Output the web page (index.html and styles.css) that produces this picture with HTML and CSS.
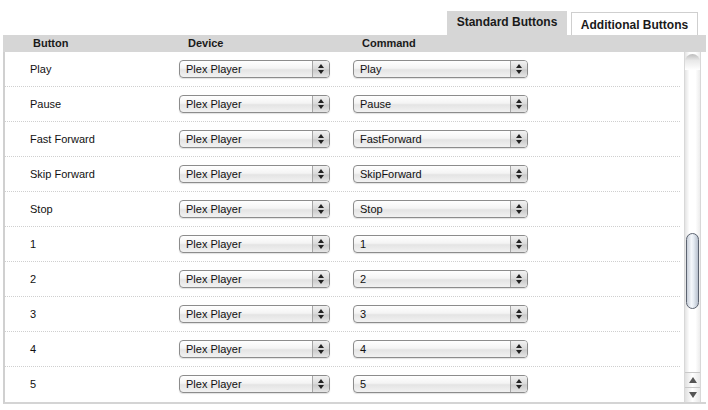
FILE: index.html
```html
<!DOCTYPE html>
<html lang="en">
<head>
    <meta charset="UTF-8">
    <title>Remote Buttons</title>
    <link rel="stylesheet" href="styles.css">
</head>
<body>

<div class="panel">
    <!-- Tabs across the top right -->
    <div class="tabs">
        <div class="tab active">Standard Buttons</div>
        <div class="tab">Additional Buttons</div>
    </div>

    <!-- Column headings -->
    <div class="head">
        <span class="col-btn">Button</span>
        <span class="col-dev">Device</span>
        <span class="col-cmd">Command</span>
    </div>

    <div class="body">
        <div class="rows" id="rows"></div>

        <!-- Aqua style scrollbar -->
        <div class="scroll">
            <div class="scroll-cap"></div>
            <div class="scroll-track">
                <div class="scroll-thumb"></div>
            </div>
            <div class="scroll-arrow"><span class="up"></span></div>
            <div class="scroll-arrow"><span class="down"></span></div>
        </div>
    </div>
</div>

<script>
// Buttons shown in the list, with the command each one sends
const buttons = [
    ['Play', 'Play'],
    ['Pause', 'Pause'],
    ['Fast Forward', 'FastForward'],
    ['Skip Forward', 'SkipForward'],
    ['Stop', 'Stop'],
    ['1', '1'],
    ['2', '2'],
    ['3', '3'],
    ['4', '4'],
    ['5', '5']
];

function selectBox(text, cls) {
    return '<div class="select ' + cls + '"><span class="value">' + text + '</span>' +
        '<span class="stepper"><i class="up"></i><i class="down"></i></span></div>';
}

const rows = document.getElementById('rows');
buttons.forEach(b => {
    const row = document.createElement('div');
    row.className = 'row';
    row.innerHTML = '<span class="label">' + b[0] + '</span>' +
        selectBox('Plex Player', 'device') + selectBox(b[1], 'command');
    rows.appendChild(row);
});
</script>

</body>
</html>
```

FILE: styles.css
```css
body {
    margin: 0;
    background: #ffffff;
    font-family: "Liberation Sans", Arial, sans-serif;
    font-size: 11px;
    color: #111111;
}

.panel {
    margin-left: 3px;
    width: 703px;
}

/* tabs */
.tabs {
    display: flex;
    justify-content: flex-end;
    align-items: flex-end;
    height: 35px;
    padding-right: 8px;
}

.tab {
    box-sizing: border-box;
    height: 23px;
    width: 127px;
    margin-left: 4px;
    border: 1px solid #cfcfcf;
    border-bottom: none;
    background: #ffffff;
    font-weight: bold;
    font-size: 12px;
    text-align: center;
    padding-top: 5px;
    color: #1a1a1a;
}

.tab.active {
    width: 120px;
    height: 24px;
    border: none;
    background: #d6d6d6;
    padding-top: 4px;
}

/* column heading band */
.head {
    display: flex;
    height: 17px;
    align-items: center;
    background: #d6d6d6;
    font-weight: bold;
    color: #1a1a1a;
    padding-bottom: 1px;
    box-sizing: border-box;
}

.col-btn { margin-left: 30px; width: 155px; }
.col-dev { width: 174px; }

/* list area */
.body {
    display: flex;
    border-left: 2px solid #d0d0d0;
    border-bottom: 2px solid #d4d4d4;
    height: 350px;
}

.rows {
    flex: 1;
    margin-right: 4px;
}

.row {
    display: flex;
    align-items: center;
    height: 35px;
    box-sizing: border-box;
    border-bottom: 1px dotted #cfcfcf;
    padding-bottom: 1px;
}

.row:last-child {
    border-bottom: none;
}

.label {
    width: 149px;
    padding-left: 25px;
}

/* aqua popup buttons */
.select {
    display: flex;
    box-sizing: border-box;
    height: 18px;
    border: 1px solid #8c8c8c;
    border-radius: 4px;
    background: linear-gradient(#ffffff 0%, #f4f4f4 45%, #e4e4e4 55%, #f2f2f2 100%);
    box-shadow: 0 1px 1px rgba(0, 0, 0, 0.12);
}

.select.device { width: 151px; }
.select.command { width: 175px; margin-left: 23px; }

.value {
    flex: 1;
    padding-left: 6px;
    line-height: 16px;
}

.stepper {
    width: 16px;
    border-left: 1px solid #a6a6a6;
    border-radius: 0 3px 3px 0;
    background: linear-gradient(#f2f2f2 0%, #d9d9d9 50%, #c9c9c9 55%, #e6e6e6 100%);
    display: flex;
    flex-direction: column;
    align-items: center;
    justify-content: center;
    gap: 2px;
}

.stepper i {
    width: 0;
    height: 0;
    border-left: 3px solid transparent;
    border-right: 3px solid transparent;
}

.stepper .up { border-bottom: 4px solid #222; }
.stepper .down { border-top: 4px solid #222; }

/* scrollbar */
.scroll {
    width: 15px;
    margin-right: 5px;
    display: flex;
    flex-direction: column;
    border-left: 1px solid #d8d8d8;
    border-right: 1px solid #d8d8d8;
    background: linear-gradient(to right, #e4e4e4, #ffffff 30%, #ffffff 70%, #ececec);
}

.scroll-cap {
    height: 16px;
    margin-top: 2px;
    border-radius: 8px 8px 0 0;
    background: linear-gradient(#bdbdbd, #e8e8e8 40%, #ffffff);
}

.scroll-track {
    flex: 1;
    position: relative;
}

.scroll-thumb {
    position: absolute;
    left: 1px;
    right: 1px;
    top: 163px;
    height: 76px;
    box-sizing: border-box;
    border: 1px solid #5c6370;
    border-radius: 7px;
    background: linear-gradient(to right, #c9d0da, #f4f7fb 40%, #e6ecf3 60%, #b7c0cd);
}

.scroll-arrow {
    height: 14px;
    border-top: 1px solid #c8c8c8;
    display: flex;
    align-items: center;
    justify-content: center;
    background: linear-gradient(to right, #e0e0e0, #ffffff 50%, #e8e8e8);
}

.scroll-arrow span {
    width: 0;
    height: 0;
    border-left: 4px solid transparent;
    border-right: 4px solid transparent;
}

.scroll-arrow .up { border-bottom: 6px solid #555; }
.scroll-arrow .down { border-top: 6px solid #555; }
```
